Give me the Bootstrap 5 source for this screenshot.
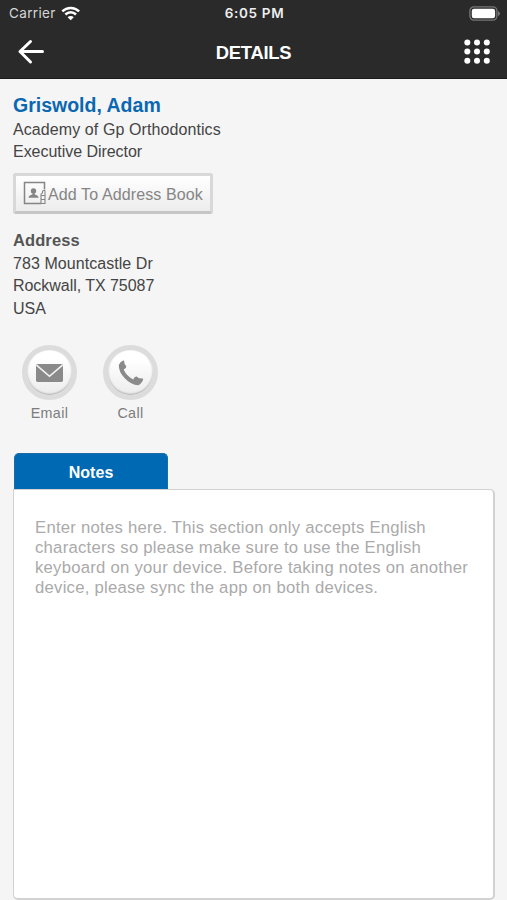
<!DOCTYPE html>
<html lang="en">
<head>
<meta charset="utf-8">
<meta name="viewport" content="width=device-width, initial-scale=1">
<title>Details</title>
<link href="https://cdn.jsdelivr.net/npm/bootstrap@5.3.0/dist/css/bootstrap.min.css" rel="stylesheet">
<style>
body{background:#f5f5f5;font-family:"Liberation Sans",Arial,sans-serif;font-size:16px;line-height:22.4px;letter-spacing:-.04px;color:#444;height:900px;overflow:hidden}
svg{display:block;flex:none}
.top-area{background:#2a2a2a;color:#fff;height:79px;border-bottom:1px solid #1c1c1c}
.status-row{height:27px;padding:0 7px 0 9px;font-family:Inter,sans-serif;font-size:13.5px;line-height:27px}
.side{flex:1 1 0}
.carrier{color:#d6d6d6;letter-spacing:.35px}
.clock{font-weight:600;font-size:13.5px;letter-spacing:.65px;color:#eee}
.title-row{height:51px;padding:0 17px}
.title-row .side{margin-top:-2px}
.page-title{font-size:18.4px;font-weight:700;letter-spacing:-.25px;line-height:24px}
.content{height:821px;padding:14px 12px 0 13px}
.person{font-size:19.5px;line-height:24px;font-weight:700;color:#0a67b1;letter-spacing:0;margin-bottom:2px}
.org{letter-spacing:.09px}
.book-btn{width:200px;height:41px;margin-top:9px;padding:0 0 0 7px;border:3px solid #d8d8d8;border-bottom-color:#c6c6c6;border-radius:3px;background:linear-gradient(#fff,#ececec);color:#858585;font-size:16px;letter-spacing:.12px}
.book-btn span{margin:4px 0 0 2px}
.addr{margin-top:15px}
.addr h2{font-size:16.5px;line-height:23px;font-weight:700;color:#555;letter-spacing:.1px}
.street{margin-top:1px;letter-spacing:.06px}
.actions{margin:25px 0 0 9px;gap:26px}
.action{width:55px;font-size:14.3px;line-height:20px;color:#7c7c7c;text-decoration:none;letter-spacing:.4px}
.action-label{margin-top:3px}
.round{width:55px;height:55px;border:5px solid #dcdcdc;background:linear-gradient(#fff 20%,#ececec);box-shadow:inset 0 -1px 2px #aaa}
.notes-tab{width:154px;height:36px;margin-left:1px;padding-top:3px;background:#0069b4;color:#fff;border:1px solid #1b6ca6;border-bottom:0;border-radius:5px 5px 0 0;font-weight:700;letter-spacing:.05px}
.notes-box{width:482px;height:411px;border:1px solid #d2d2d2;border-right-width:2px;border-bottom-width:2px;border-radius:0 5px 5px 5px;background:#fff;padding:28px 20px 0 21px;color:#aaa;font-size:16.7px;line-height:20px;letter-spacing:.25px;white-space:nowrap}
</style>
</head>
<body>
<header class="top-area">
  <div class="status-row d-flex align-items-center">
    <div class="side d-flex align-items-center"><span class="carrier">Carrier</span>
      <svg class="ms-1" width="20" height="16" viewBox="0 0 20 16" fill="none" stroke="#fff" stroke-width="2.5"><path d="M2.3 5.400a12 12 0 0 1 16.8 0M5.400 8.500a7.6 7.6 0 0 1 10.600 0"/><path d="M10.700 14.300 7.600 11.200a4.4 4.4 0 0 1 6.200 0z" fill="#fff" stroke="none"/></svg>
    </div>
    <div class="clock">6:05 PM</div>
    <div class="side d-flex justify-content-end">
      <svg width="31" height="15" viewBox="0 0 31 15"><rect x=".9" y=".9" width="27" height="13.2" rx="4" fill="#2a2a2a" stroke="#777" stroke-width="1.3"/><rect x="2.8" y="2.7" width="23.3" height="9.6" rx="2.3" fill="#fff"/><path d="M29 5v5q2-1 2-2.500T29 5z" fill="#777"/></svg>
    </div>
  </div>
  <div class="title-row d-flex align-items-center">
    <div class="side"><svg width="28" height="26" viewBox="0 0 28 26" fill="none" stroke="#fff" stroke-width="3" stroke-linecap="round" stroke-linejoin="round"><path d="M25.500 12.500H3M13.500 2.500 3 12.500l10.500 10.500"/></svg></div>
    <h1 class="page-title mb-0">DETAILS</h1>
    <div class="side d-flex justify-content-end">
      <svg width="26" height="26" viewBox="0 0 26 26" fill="#fff"><circle cx="3.300" cy="3.500" r="3"/><circle cx="13" cy="3.500" r="3"/><circle cx="22.800" cy="3.500" r="3"/><circle cx="3.300" cy="12.500" r="3"/><circle cx="13" cy="12.500" r="3"/><circle cx="22.800" cy="12.500" r="3"/><circle cx="3.300" cy="21.700" r="3"/><circle cx="13" cy="21.700" r="3"/><circle cx="22.800" cy="21.700" r="3"/></svg>
    </div>
  </div>
</header>
<main class="content d-flex flex-column align-items-start">
  <h2 class="person">Griswold, Adam</h2>
  <div class="org">Academy of Gp Orthodontics</div>
  <div>Executive Director</div>
  <button class="book-btn d-flex align-items-center text-nowrap" type="button">
    <svg width="23" height="24" viewBox="0 0 23 24" fill="none" stroke="#858585" stroke-width="1.500"><path d="M21.500 8.500V1.500H1.500v21H18"/><path d="M22 9.500h-1.500q-1 0-1 1v1.500q-1.500.3-1.500 1.500v9h4v-13M18 14.500h3.500M18 18.500h3.500" stroke-width="1.100"/><g fill="#858585" stroke="none"><circle cx="10.500" cy="10" r="2.700"/><path d="M5.500 16.800q.3-2.500 3.800-3.200l.5-1.700h1.500l.5 1.700q3.500.7 3.800 3.200z"/></g></svg>
    <span>Add To Address Book</span>
  </button>
  <section class="addr">
    <h2 class="mb-0">Address</h2>
    <div class="street">783 Mountcastle Dr</div>
    <div>Rockwall, TX 75087</div>
    <div>USA</div>
  </section>
  <div class="actions d-flex">
    <a class="action d-flex flex-column align-items-center" href="#">
      <span class="round rounded-circle d-flex align-items-center justify-content-center"><svg width="27" height="18" viewBox="0 0 27 18"><rect width="27" height="18" rx="1.800" fill="#8a8a8a"/><path d="M.5 1 13.500 12.300 26.500 1" fill="none" stroke="#f4f4f4" stroke-width="1.600"/></svg></span>
      <span class="action-label">Email</span>
    </a>
    <a class="action d-flex flex-column align-items-center" href="#">
      <span class="round rounded-circle d-flex align-items-center justify-content-center"><svg width="26" height="26" viewBox="0 0 26 26" fill="#8a8a8a"><path d="M.8 5Q2 1.800 5.200.4L6 .6 6.600 4 8.300 6.300Q8.700 8.300 5.700 9.600 8.500 16.300 15.300 19.500 16.300 16.400 18.600 16.600L21 18.300 24.800 18.600 25.200 19.300Q24 23.500 20.300 25.200 13 25 6.500 18 .5 11.500.8 5z"/></svg></span>
      <span class="action-label">Call</span>
    </a>
  </div>
  <section class="mt-auto">
    <div class="notes-tab d-flex align-items-center justify-content-center">Notes</div>
    <div class="notes-box">Enter notes here. This section only accepts English<br>characters so please make sure to use the English<br>keyboard on your device. Before taking notes on another<br>device, please sync the app on both devices.</div>
  </section>
</main>
<script src="https://cdn.jsdelivr.net/npm/bootstrap@5.3.0/dist/js/bootstrap.bundle.min.js"></script>
</body>
</html>
